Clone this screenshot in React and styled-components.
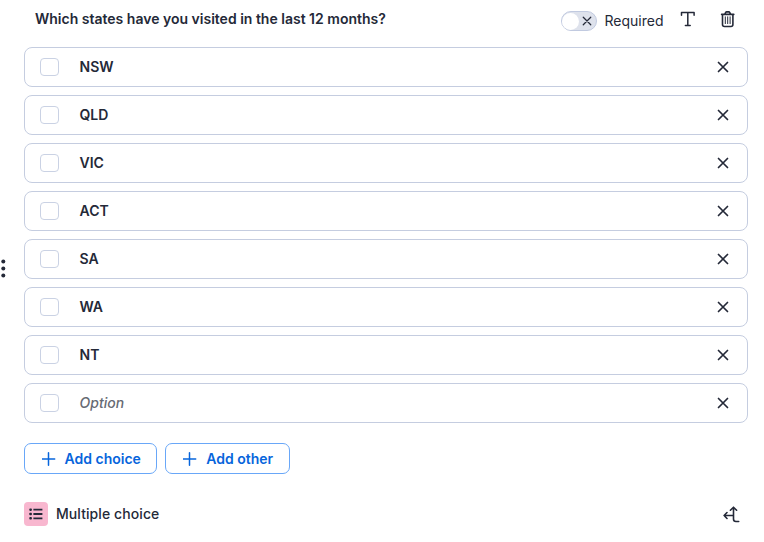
import React from 'react';
import styled, { createGlobalStyle } from 'styled-components';

const Global = createGlobalStyle`
  * { box-sizing: border-box; }
  body {
    margin: 0;
    background: #fff;
    color: #242938;
    font-family: Inter, "Liberation Sans", sans-serif;
    font-size: 14px;
    line-height: 20px;
    overflow: hidden;
  }
  svg { display: block; flex: none; }
`;

const Card = styled.main`
  display: flex;
  width: 764px;
  height: 542px;
`;
const DragHandle = styled.div`
  width: 24px;
  height: 536px;
  display: flex;
  align-items: center;
`;
const Content = styled.section`
  width: 724px;
`;
const Header = styled.header`
  height: 47px;
  display: flex;
  align-items: flex-start;
  padding: 9px 12px 0 11px;
`;
const Title = styled.h1`
  margin: 0;
  flex: 1;
  font-size: 14px;
  line-height: 20px;
  font-weight: 600;
  white-space: nowrap;
`;
const Tools = styled.div`
  display: flex;
  align-items: center;
  height: 20px;
  margin-top: 2px;
`;
const Toggle = styled.span`
  width: 36px;
  height: 20px;
  border: 1px solid #c1cae0;
  border-radius: 10px;
  background: #dee2ec;
  display: flex;
  align-items: center;
  justify-content: space-between;
  padding-right: 4.5px;
`;
const Knob = styled.span`
  width: 17px;
  height: 17px;
  border-radius: 50%;
  background: #fff;
`;
const RequiredLabel = styled.span`
  width: 75px;
  padding-left: 7.5px;
  font-size: 14px;
  white-space: nowrap;
`;
const ToolIcon = styled.span`
  margin-left: ${(p) => p.$gap}px;
  margin-top: -4px;
`;
const Options = styled.div`
  display: flex;
  flex-direction: column;
  gap: 8px;
`;
const OptionRow = styled.div`
  height: 40px;
  border: 1px solid #c5cde0;
  border-radius: 8px;
  display: flex;
  align-items: center;
  padding: 0 18px 0 15px;
`;
const Checkbox = styled.span`
  width: 19px;
  height: 18px;
  border: 1px solid #cad2e4;
  border-radius: 4px;
`;
const OptionText = styled.span`
  flex: 1;
  margin-left: 20.5px;
  font-weight: ${(p) => (p.$placeholder ? 500 : 600)};
  font-style: ${(p) => (p.$placeholder ? 'italic' : 'normal')};
  color: ${(p) => (p.$placeholder ? '#666a73' : 'inherit')};
`;
const Actions = styled.div`
  display: flex;
  gap: 8px;
  margin-top: 20px;
`;
const AddButton = styled.button`
  width: ${(p) => p.$width}px;
  height: 31px;
  padding: 0 0 0 16.5px;
  border: 1px solid #69a7f8;
  border-radius: 7px;
  background: #fff;
  color: #0765dc;
  display: flex;
  align-items: center;
  gap: ${(p) => p.$gap}px;
  font: 600 14px/20px Inter, "Liberation Sans", sans-serif;
  white-space: nowrap;
`;
const Footer = styled.footer`
  display: flex;
  align-items: center;
  height: 24px;
  margin-top: 28px;
  padding-right: 8px;
`;
const TypeBadge = styled.span`
  width: 24px;
  height: 24px;
  border-radius: 4px;
  background: #f8b7cf;
  display: grid;
  place-items: center;
`;
const TypeName = styled.span`
  flex: 1;
  margin-left: 8px;
  font-weight: 550;
  letter-spacing: 0.08px;
`;

const Cross = ({ size = 12, weight = 1.7 }) => (
  <svg width={size} height={size} viewBox="0 0 12 12" fill="none" stroke="#242938" strokeWidth={weight} strokeLinecap="round">
    <path d="M1.5 1.5 10.5 10.5M10.5 1.5 1.5 10.5" />
  </svg>
);
const Plus = () => (
  <svg width="14" height="14" viewBox="0 0 14 14" fill="none" stroke="#0765dc" strokeWidth="1.5" strokeLinecap="round">
    <path d="M6.5 .8v12.4M.3 7h12.4" />
  </svg>
);
const TypeIcon = () => (
  <svg width="16" height="16" viewBox="0 0 16 16" fill="none" stroke="#242938" strokeWidth="1.5" strokeLinecap="round" strokeLinejoin="round">
    <path d="M1.5 4.3V1.5h12.6v2.8M7.8 1.5v13M5.4 14.5h4.8" />
  </svg>
);
const Trash = () => (
  <svg width="16" height="18" viewBox="0 0 16 18" fill="none" stroke="#242938" strokeLinecap="round" strokeLinejoin="round">
    <path strokeWidth="1.6" d="M1.6 4.4h12.2M4.8 4.1l.8-1.5Q6 1.9 6.6 1.9h2.2q.6 0 1 .7l.8 1.5M2.5 4.5v10q0 2 2 2h6.4q2 0 2-2v-10" />
    <path strokeWidth="1" d="M5.3 6.8v6.8M7.7 6.8v6.8M10.1 6.8v6.8" />
  </svg>
);
const ListIcon = () => (
  <svg width="14" height="12" viewBox="0 0 14 12" fill="#242938">
    <rect x=".3" y=".5" width="2.6" height="2.4" rx=".8" />
    <rect x=".3" y="4.8" width="2.6" height="2.4" rx=".8" />
    <rect x=".3" y="9.1" width="2.6" height="2.4" rx=".8" />
    <path d="M4.4 .8h9v1.8h-9zM4.4 5.1h9v1.8h-9zM4.4 9.4h9v1.8h-9z" />
  </svg>
);
const Branch = () => (
  <svg width="17" height="17" viewBox="0 0 17 17" fill="none" stroke="#242938" strokeWidth="1.6" strokeLinecap="round" strokeLinejoin="round">
    <path d="M10.5 1.3v11.8q0 2.4 2.4 2.4h2.8M7.4 4.2l3.1-3 3.1 3M10.5 9.5H1.1M4 6.5 1.1 9.5l2.9 3" />
  </svg>
);
const Dots = () => (
  <svg width="6" height="20" viewBox="0 0 6 20" fill="#242938">
    <circle cx="3.3" cy="3.4" r="2" />
    <circle cx="3.3" cy="10.4" r="2" />
    <circle cx="3.3" cy="17.4" r="2" />
  </svg>
);

const choices = ['NSW', 'QLD', 'VIC', 'ACT', 'SA', 'WA', 'NT', ''];

export default function App() {
  return (
    <>
      <Global />
      <Card>
        <DragHandle><Dots /></DragHandle>
        <Content>
          <Header>
            <Title>Which states have you visited in the last 12 months?</Title>
            <Tools>
              <Toggle><Knob /><Cross size={10} weight={1.5} /></Toggle>
              <RequiredLabel>Required</RequiredLabel>
              <ToolIcon $gap={8}><TypeIcon /></ToolIcon>
              <ToolIcon $gap={24}><Trash /></ToolIcon>
            </Tools>
          </Header>
          <Options>
            {choices.map((name) => (
              <OptionRow key={name}>
                <Checkbox />
                <OptionText $placeholder={!name}>{name || 'Option'}</OptionText>
                <Cross />
              </OptionRow>
            ))}
          </Options>
          <Actions>
            <AddButton $width={133} $gap={9}><Plus />Add choice</AddButton>
            <AddButton $width={125} $gap={9.7}><Plus />Add other</AddButton>
          </Actions>
          <Footer>
            <TypeBadge><ListIcon /></TypeBadge>
            <TypeName>Multiple choice</TypeName>
            <Branch />
          </Footer>
        </Content>
      </Card>
    </>
  );
}
